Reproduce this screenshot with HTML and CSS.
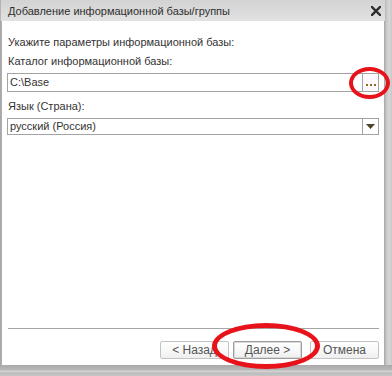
FILE: index.html
```html
<!DOCTYPE html>
<html lang="ru">
<head>
<meta charset="utf-8">
<title>Добавление информационной базы/группы</title>
<link rel="stylesheet" href="styles.css">
</head>
<body>
<div class="window">
  <div class="titlebar">
    <span class="title">Добавление информационной базы/группы</span>
    <svg class="close" width="10" height="10" viewBox="0 0 10 10"><path d="M1 1 L9 9 M9 1 L1 9" stroke="#2e2e2e" stroke-width="2.4" stroke-linecap="square"/></svg>
  </div>
  <div class="client">
    <div class="form">
      <div class="label heading">Укажите параметры информационной базы:</div>
      <div class="label">Каталог информационной базы:</div>
      <div class="field">
        <div class="input">C:\Base</div>
        <div class="btn-dots"><span class="dot"></span><span class="dot"></span><span class="dot"></span></div>
      </div>
      <div class="label">Язык (Страна):</div>
      <div class="field select">
        <div class="input">русский (Россия)</div>
        <div class="btn-drop"><svg width="9" height="5" viewBox="0 0 9 5"><path d="M0 0 H9 L4.5 5 Z" fill="#4e4328"/></svg></div>
      </div>
    </div>
    <div class="footer">
      <div class="separator"></div>
      <div class="buttons">
        <div class="button">&lt; Назад</div>
        <div class="button default">Далее &gt;</div>
        <div class="button cancel">Отмена</div>
      </div>
    </div>
  </div>
  <div class="mark mark-dots"></div>
  <div class="mark mark-next"></div>
</div>
</body>
</html>
```
FILE: styles.css
```css
* { box-sizing: border-box; }
html, body { margin: 0; padding: 0; }
body {
  width: 392px;
  height: 376px;
  overflow: hidden;
  background: #c9c9c9;
  font-family: "Liberation Sans", Arial, sans-serif;
  font-size: 11px;
  color: #333333;
}
.window {
  position: relative;
  width: 392px;
  height: 376px;
  display: flex;
  flex-direction: column;
  background:
    linear-gradient(to bottom, transparent 365px, #a9a9a9 365px, #b8b8b8 370px, #d8d8d8 371px, #bcbcbc 373px, #c6c6c6 376px),
    linear-gradient(to right, #a6a6a6 0, #b0b0b0 2px, #d2d2d2 2px, #d2d2d2 383px, #a2a2a2 384px, #c4c4c4 386px, #d7d7d7 389px, #c8c8c8 392px);
  padding: 0 8px 11px 0;
}
.titlebar {
  height: 21px;
  flex: none;
  display: flex;
  align-items: center;
  justify-content: space-between;
  padding: 0 4px 0 7px;
  margin-right: -1px;
  background: linear-gradient(to bottom, #d3d3d3, #dadada 50%, #e2e2e2);
  border-left: 1px solid #b4b4b4;
}
.title {
  color: #2f2f2f;
  font-size: 11px;
  padding-top: 1px;
}
.close { margin-top: 1px; }
.client {
  flex: 1;
  margin-left: 2px;
  background: #ffffff;
  display: flex;
  flex-direction: column;
  justify-content: space-between;
  padding: 14px 5px 6px 5px;
}
.form {
  display: flex;
  flex-direction: column;
}
.label {
  line-height: 15px;
  padding-left: 1px;
  margin-bottom: 4px;
}
.field {
  display: flex;
  height: 19px;
  margin-bottom: 7px;
}
.field.select { height: 17px; }
.input {
  flex: 1;
  border: 1px solid #a3a3a3;
  padding: 0 2px;
  line-height: 17px;
  color: #333333;
}
.field.select .input { line-height: 15px; }
.btn-dots, .btn-drop {
  width: 16px;
  flex: none;
  border: 1px solid #a3a3a3;
  border-left: none;
  background: #fdf9fc;
}
.btn-dots {
  display: flex;
  align-items: flex-end;
  justify-content: center;
  gap: 2px;
  padding-bottom: 5px;
}
.dot {
  width: 2px;
  height: 2px;
  background: #8a6d1c;
}
.btn-drop {
  background: #ffffff;
  display: flex;
  align-items: center;
  justify-content: center;
}
.footer {
  display: flex;
  flex-direction: column;
}
.separator {
  height: 1px;
  background: #a6a6a6;
  margin: 0 0 12px 1px;
}
.buttons {
  display: flex;
  justify-content: flex-end;
  gap: 4px;
}
.button {
  width: 69px;
  height: 18px;
  border: 1px solid #c4c4c4;
  border-radius: 2px;
  background: linear-gradient(to bottom, #ffffff, #f7f7f7 60%, #eeeeee);
  text-align: center;
  line-height: 16px;
  font-size: 12px;
  color: #555555;
}
.button.default {
  border: 1px solid #9c9c9c;
  box-shadow: inset 0 0 0 1px #d9d9d9;
}
.button.cancel { margin-left: 4px; }
.mark {
  position: absolute;
  border-radius: 50%;
  border: 4px solid #e8121b;
}
.mark-dots {
  left: 349px;
  top: 67px;
  width: 41px;
  height: 32px;
}
.mark-next {
  left: 212px;
  top: 323px;
  width: 108px;
  height: 46px;
  border-width: 5px;
}
```
